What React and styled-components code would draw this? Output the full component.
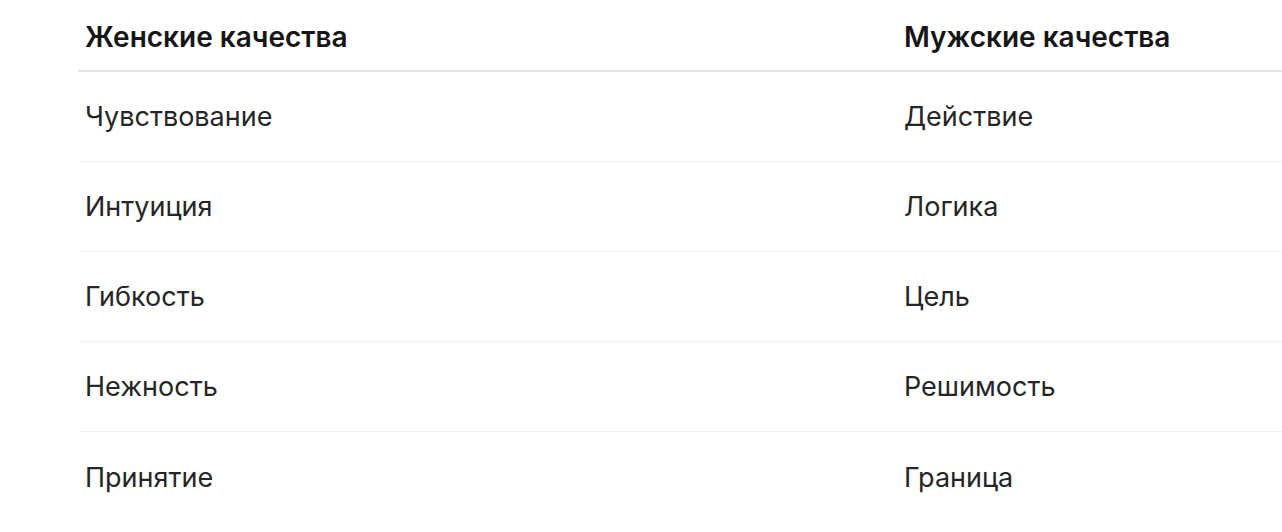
import React from 'react'
import styled, { createGlobalStyle } from 'styled-components'

const GlobalStyle = createGlobalStyle`
  html, body {
    margin: 0;
    padding: 0;
    background: #ffffff;
  }
  body {
    font-family: Inter, 'Liberation Sans', Arial, sans-serif;
    color: #222222;
    overflow: hidden;
  }
`

const Page = styled.div`
  padding: 0 0 0 78px;
`

const Table = styled.div`
  display: grid;
  grid-template-columns: 819px 1fr;
`

const HeadCell = styled.div`
  height: 72px;
  padding: 4px 8px 0 7px;
  box-sizing: border-box;
  display: flex;
  align-items: center;
  border-bottom: 2px solid #e4e4e4;
  font-size: 28px;
  font-weight: 600;
  color: #161616;
`

const Cell = styled.div`
  height: 90px;
  padding: 0 8px 0 7px;
  box-sizing: border-box;
  display: flex;
  align-items: center;
  border-bottom: ${(p) => (p.last ? 'none' : '1px solid #f0f0f0')};
  font-size: 27px;
  font-weight: 400;
  color: #262626;
`

const rows = [
  ['Чувствование', 'Действие'],
  ['Интуиция', 'Логика'],
  ['Гибкость', 'Цель'],
  ['Нежность', 'Решимость'],
  ['Принятие', 'Граница']
]

const App = () => {
  return (
    <>
      <GlobalStyle />
      <Page>
        <Table>
          <HeadCell>Женские качества</HeadCell>
          <HeadCell>Мужские качества</HeadCell>
          {rows.map((r, i) => (
            <React.Fragment key={i}>
              <Cell last={i === rows.length - 1}>{r[0]}</Cell>
              <Cell last={i === rows.length - 1}>{r[1]}</Cell>
            </React.Fragment>
          ))}
        </Table>
      </Page>
    </>
  )
}

export default App
